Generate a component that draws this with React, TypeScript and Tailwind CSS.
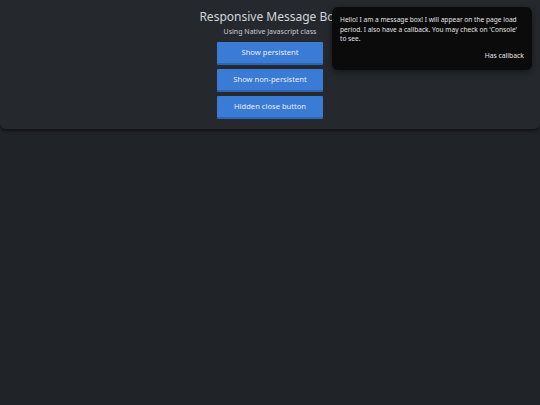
import React from "react";

export default function App() {
  return (
    <div
      className="relative w-[540px] h-[405px] bg-[#202327] overflow-hidden"
      style={{ fontFamily: '"Noto Sans", "Open Sans", sans-serif' }}
    >
      <div className="w-full bg-[#25292e] rounded-b-[6px] shadow-[0_2px_3px_rgba(0,0,0,0.45)] pt-[9px] pb-[10px] flex flex-col items-center">
        <h1 className="text-[12px] leading-[16px] text-[#d3d6da] font-normal">
          Responsive Message Box
        </h1>
        <p className="text-[7px] leading-[10px] text-[#c9ccd0] mt-[2px]">
          Using Native Javascript class
        </p>
        <div className="flex flex-col gap-[4px] mt-[5px]">
          {["Show persistent", "Show non-persistent", "Hidden close button"].map((t) => (
            <button
              key={t}
              className="w-[106px] h-[23px] bg-[#3a7bd5] border-b-[2px] border-[#2f66b4] rounded-[1px] text-[7.6px] text-[#e8eef7] flex items-center justify-center"
            >
              {t}
            </button>
          ))}
        </div>
      </div>

      <div className="absolute left-[332px] top-[7px] w-[200px] h-[63px] bg-[#0b0b0c] rounded-[6px] shadow-[0_2px_6px_rgba(0,0,0,0.5)] px-[8px] pt-[8px] flex flex-col">
        <p className="text-[6.6px] leading-[9.6px] text-[#e4e4e4]">
          Hello! I am a message box! I will appear on the page load period. I also have a callback. You may check on 'Console' to see.
        </p>
        <div className="mt-[7px] text-right text-[6.8px] leading-[10px] text-[#e4e4e4]">
          Has callback
        </div>
      </div>
    </div>
  );
}
